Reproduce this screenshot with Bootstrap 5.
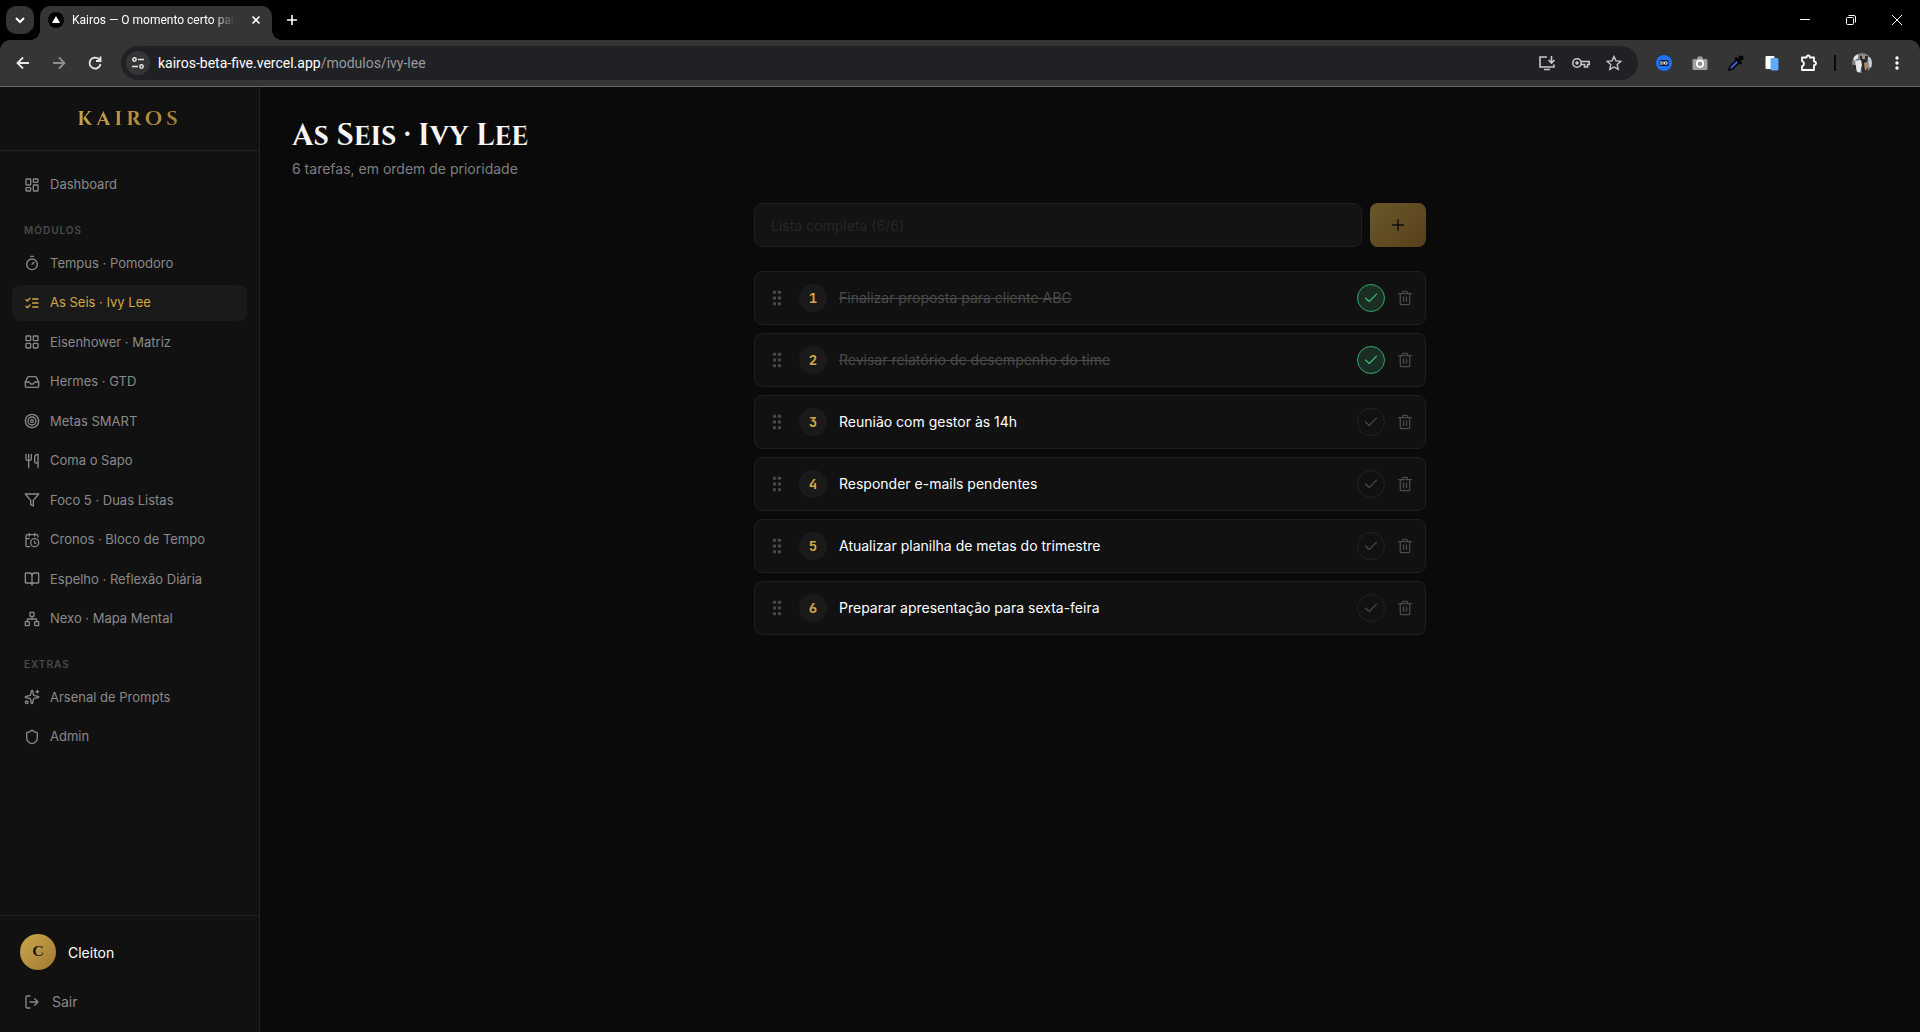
<!DOCTYPE html>
<html lang="pt-BR">
<head>
<meta charset="utf-8">
<meta name="viewport" content="width=device-width, initial-scale=1">
<title>Kairos — O momento certo</title>
<link href="https://cdn.jsdelivr.net/npm/bootstrap@5.3.0/dist/css/bootstrap.min.css" rel="stylesheet">
<style>
  body { background: #0a0a0a; color: #f5f5f5; font-family: Inter, sans-serif; font-size: 14px; }
  svg { display: block; flex: none; }
  .ico { width: 16px; height: 16px; fill: none; stroke: currentColor; stroke-width: 2; stroke-linecap: round; stroke-linejoin: round; }
  button { background: none; border: 0; padding: 0; color: inherit; }

  /* browser window */
  .tabstrip { height: 40px; background: #000; padding-left: 6px; }
  .tab-menu { width: 28px; height: 28px; border-radius: 10px; background: #353535; color: #fff; }
  .tab-open { width: 232px; height: 34px; margin: 6px 0 0 6px; padding: 0 10px 6px 8px; border-radius: 10px 10px 0 0; background: #353535; position: relative; font: 12px/16px Roboto, sans-serif; color: #fff; }
  .tab-open::before, .tab-open::after { content: ""; position: absolute; bottom: 0; width: 10px; height: 10px; }
  .tab-open::before { left: -10px; background: radial-gradient(circle at 0 0, #000 10px, #353535 10px); }
  .tab-open::after { right: -10px; background: radial-gradient(circle at 100% 0, #000 10px, #353535 10px); }
  .tab-name { margin-left: 8px; -webkit-mask-image: linear-gradient(90deg, #000 86%, transparent); mask-image: linear-gradient(90deg, #000 86%, transparent); }
  .tab-new { margin-left: 12px; }
  .winctl { gap: 34px; padding-right: 17px; color: #fff; }
  .toolbar-wrap { background: #000; }
  .urlbar { height: 47px; background: #353535; border-bottom: 1px solid #666; border-radius: 10px 10px 0 0; padding: 0 16px 0 15px; }
  .navctl { gap: 20px; margin-right: 18px; color: #e8e8e8; }
  .omnibox { height: 34px; border-radius: 17px; background: #202124; padding: 0 16px 0 5px; color: #c7c7c7; }
  .siteinfo { width: 24px; height: 24px; border-radius: 12px; background: #353535; color: #e8e8e8; }
  .address { margin-left: 8px; font: 14px/20px Roboto, sans-serif; color: #9a9a9a; }
  .address b { font-weight: 400; color: #fff; }
  .exts { gap: 20px; margin-left: 18px; color: #fff; }
  .ext-sep { width: 2px; height: 16px; background: #0a0a0a; }

  /* app */
  .side { width: 260px; background: #111; border-right: 1px solid #222; }
  .brandbox { height: 64px; border-bottom: 1px solid #222; }
  .brandname { font: 700 20px/30px Cinzel, "Liberation Serif", serif; letter-spacing: 4px; background: linear-gradient(135deg, #c9a84c, #a07830); -webkit-background-clip: text; background-clip: text; color: transparent; }
  .menu { padding: 16px 12px; }
  .menu-link { display: flex; align-items: center; gap: 10px; padding: 8px 12px; margin-bottom: 4px; border-radius: 8px; font-size: 13px; line-height: 1.5; color: #8a8a8a; text-decoration: none; }
  .menu-link.on { background: #1a1a1a; color: #d4a843; }
  .menu-head { padding: 16px 12px 8px; font-size: 10px; line-height: 15px; font-weight: 600; letter-spacing: 1px; color: #4a4a4a; margin: 0; }
  .userbox { border-top: 1px solid #222; padding: 12px; }
  .who { padding: 6px 8px; margin-bottom: 7px; gap: 12px; color: #fff; }
  .face { width: 36px; height: 36px; background: linear-gradient(135deg, #c9a84c, #a07830); color: #0a0a0a; font: 600 14px/36px Cinzel, "Liberation Serif", serif; text-align: center; }
  .leave { padding: 8px 12px; gap: 12px; line-height: 21px; color: #8a8a8a; }
  .content { padding: 32px; }
  .heading { font: 700 30px/35px Cinzel, "Liberation Serif", serif; margin: 0; color: #f5f5f5; }
  .subtitle { line-height: 21px; margin: 4px 0 24px; color: #7f7f7f; }
  .sheet { max-width: 672px; }
  .addbox { height: 44px; background: #131313; border: 1px solid #1f1f1f; border-radius: 8px; padding: 0 16px; color: #f5f5f5; min-width: 0; }
  .addbox::placeholder { color: #262626; opacity: 1; }
  .addbtn { width: 56px; height: 44px; border-radius: 8px; background: linear-gradient(135deg, #6a5829, #57401c); color: #0a0a0a; }
  .task { background: #111; border: 1px solid #1f1f1f; border-radius: 8px; padding: 12px; gap: 12px; }
  .grip, .bin { color: #4a4a4a; }
  .bin .ico { stroke-width: 1.3; }
  .rank { width: 28px; height: 28px; background: #1a1a1a; color: #d4a843; font: 700 14px/28px "JetBrains Mono", "Liberation Mono", monospace; text-align: center; }
  .done-btn { width: 28px; height: 28px; border: 1px solid #222; color: #4a4a4a; }
  .done-btn .ico { width: 14px; height: 14px; }
  .label-text { line-height: 20px; color: #fff; }
  .is-done .done-btn { background: #1a2e23; border-color: #33a86b; color: #3dbb78; }
  .is-done .label-text { color: #4a4a4a; text-decoration: line-through; }
</style>
<script src="https://cdn.jsdelivr.net/npm/bootstrap@5.3.0/dist/js/bootstrap.bundle.min.js"></script>
</head>
<body class="d-flex flex-column vh-100 overflow-hidden">

<svg class="d-none">
  <symbol id="check" viewBox="0 0 24 24"><path d="M21.500 5.500 9 18l-6.500-6"/></symbol>
  <symbol id="bin" viewBox="0 0 16 16"><path d="M1.500 3.700h13M5.500 3.500v-1.200q0-1 1-1h3q1 0 1 1v1.200M3.300 3.700v9.800q0 1.200 1 1.200h7.400q1 0 1-1.200V3.700M6.500 7v4.500M9.500 7v4.500"/></symbol>
  <symbol id="grip" viewBox="0 0 20 20"><g fill="currentColor" stroke="none"><circle cx="7.500" cy="4.200" r="1.700"/><circle cx="12.500" cy="4.200" r="1.700"/><circle cx="7.500" cy="10" r="1.700"/><circle cx="12.500" cy="10" r="1.700"/><circle cx="7.500" cy="15.800" r="1.700"/><circle cx="12.500" cy="15.800" r="1.700"/></g></symbol>
</svg>

<header>
  <div class="tabstrip d-flex align-items-center">
    <button class="tab-menu d-flex align-items-center justify-content-center" aria-label="Pesquisar guias"><svg width="12" height="12" viewBox="0 0 12 12" fill="none" stroke="currentColor" stroke-width="2"><path d="M2 4l4 4 4-4"/></svg></button>
    <div class="tab-open d-flex align-items-center">
      <svg width="16" height="16" viewBox="0 0 16 16"><circle cx="8" cy="8" r="8"/><path d="M8 4l4 7H4z" fill="#fff"/></svg>
      <span class="tab-name text-nowrap">Kairos — O momento certo par</span>
      <button class="ms-auto" aria-label="Fechar guia"><svg width="12" height="12" viewBox="0 0 12 12" fill="none" stroke="#fff" stroke-width="1.6"><path d="M2.500 2.500l7 7M9.500 2.500l-7 7"/></svg></button>
    </div>
    <button class="tab-new" aria-label="Nova guia"><svg width="16" height="16" viewBox="0 0 16 16" fill="none" stroke="#fff" stroke-width="1.6"><path d="M8 3v10M3 8h10"/></svg></button>
    <div class="winctl d-flex align-items-center ms-auto">
      <button aria-label="Minimizar"><svg width="12" height="12" viewBox="0 0 12 12" stroke="#fff"><path d="M1 5.500h10"/></svg></button>
      <button aria-label="Restaurar"><svg width="12" height="12" viewBox="0 0 12 12" fill="none" stroke="#fff"><rect x="1.500" y="3.500" width="7" height="7" rx="1"/><path d="M3.500 1.500H9q1.500 0 1.500 1.500v5.500"/></svg></button>
      <button aria-label="Fechar"><svg width="12" height="12" viewBox="0 0 12 12" fill="none" stroke="#fff"><path d="M1 1l10 10M11 1L1 11"/></svg></button>
    </div>
  </div>
  <div class="toolbar-wrap">
    <div class="urlbar d-flex align-items-center">
      <div class="navctl d-flex">
        <button aria-label="Voltar"><svg width="16" height="16" viewBox="0 0 16 16" fill="none" stroke="currentColor" stroke-width="1.8"><path d="M14 8H3M8 2.500L2.500 8 8 13.500"/></svg></button>
        <button class="opacity-50" aria-label="Avançar"><svg width="16" height="16" viewBox="0 0 16 16" fill="none" stroke="currentColor" stroke-width="1.8"><path d="M2 8h11M8 2.500L13.500 8 8 13.500"/></svg></button>
        <button aria-label="Recarregar"><svg width="16" height="16" viewBox="0 0 16 16" fill="none" stroke="currentColor" stroke-width="1.8"><path d="M13.500 9A5.500 5.500 0 1 1 12 4.200L13.500 6M13.500 1.500V6H9"/></svg></button>
      </div>
      <div class="omnibox d-flex align-items-center flex-grow-1">
        <button class="siteinfo d-flex align-items-center justify-content-center" aria-label="Informações do site"><svg width="14" height="14" viewBox="0 0 14 14" fill="none" stroke="currentColor" stroke-width="1.5"><circle cx="3.500" cy="3.500" r="1.700"/><path d="M7 3.500h6M1 10.500h6"/><circle cx="10.500" cy="10.500" r="1.700"/></svg></button>
        <span class="address"><b>kairos-beta-five.vercel.app</b>/modulos/ivy-lee</span>
        <div class="d-flex ms-auto gap-3 align-items-center">
          <svg width="18" height="16" viewBox="0 0 18 16" fill="none" stroke="currentColor" stroke-width="1.6"><path d="M9 2H2v10h14V9.500M13.500 1v7M10.500 5l3 3 3-3M6 14.500h6"/></svg>
          <svg width="18" height="16" viewBox="0 0 18 16" fill="none" stroke="currentColor" stroke-width="1.6"><circle cx="5" cy="8" r="4.200"/><circle cx="5" cy="8" r="1" fill="currentColor"/><path d="M9 6.500h8.200v3h-1.700v2.500h-3V9.500H9"/></svg>
          <svg width="16" height="16" viewBox="0 0 16 16" fill="none" stroke="currentColor" stroke-width="1.4"><path d="M8 1.500l2 4.400 4.800.5-3.600 3.200 1 4.800L8 12l-4.200 2.400 1-4.800L1.200 6.400 6 5.900z"/></svg>
        </div>
      </div>
      <div class="exts d-flex align-items-center">
        <svg width="16" height="16" viewBox="0 0 16 16"><circle cx="8" cy="8" r="8" fill="#2071f3"/><rect x="3.500" y="5" width="9" height="6" rx="1" fill="#0a1a3a"/><path d="M5 6v4M7 6.500v3" stroke="#fff"/><circle cx="9.700" cy="8" r="1.400" fill="none" stroke="#fff"/></svg>
        <svg width="16" height="16" viewBox="0 0 16 16"><path d="M2 4h3l1-2.500h4L11 4h3q1.500 0 1.500 1.500v8Q15.500 15 14 15H2Q.5 15 .5 13.500v-8Q.5 4 2 4z" fill="#a0a0a0"/><circle cx="8" cy="8.700" r="3.200" fill="#8c8c8c" stroke="#fff" stroke-width="1.8"/></svg>
        <svg width="16" height="16" viewBox="0 0 16 16"><path d="M1 15l1-3.500L9 4.500 11.500 7l-7 7z" fill="#3f5bd8" stroke="#000" stroke-width="1.5"/><path d="M8 3.500l4.500 4.500M10 6l3-3" stroke="#000" stroke-width="2.5" stroke-linecap="round"/><circle cx="13" cy="3" r="2.500"/></svg>
        <svg width="16" height="16" viewBox="0 0 16 16"><rect x="1.500" y="1" width="9" height="13" rx="1" fill="#fff"/><rect x="6.500" y="3" width="8" height="12.500" rx="1.500" fill="#62a8fb"/></svg>
        <div class="d-flex align-items-center gap-3">
          <svg width="18" height="18" viewBox="0 0 18 18" fill="none" stroke="#fff" stroke-width="1.8" stroke-linejoin="round"><path d="M2 3.500h4.500q0-2 1.700-2t1.700 2H14v4q2 .2 2 1.800t-2 1.800V16H2v-3.600q2-.6 2-2.600T2 7.100z"/></svg>
          <span class="ext-sep"></span>
          <svg width="20" height="20" viewBox="0 0 20 20"><defs><clipPath id="pic"><circle cx="10" cy="10" r="10"/></clipPath></defs><g clip-path="url(#pic)"><path fill="#7b8387" d="M0 0h20v20H0z"/><path fill="#2b2a2b" d="M8 3h8l-1 6 1 11h-6L8 10zM0 12h4l1 8H0z"/><path fill="#e4e7e8" d="M3 8l6-1 1 5-2 8H5zM1 3l5-2v4L2 8z"/><path fill="#b08a70" d="M12 10l3-1 1 5-3 4zM10 2h3v4h-3z"/><path fill="#c3ced3" d="M16 4l4 1v10l-3-1z"/></g></svg>
          <svg width="16" height="16" viewBox="0 0 16 16" fill="#fff"><circle cx="9" cy="3" r="1.700"/><circle cx="9" cy="8" r="1.700"/><circle cx="9" cy="13" r="1.700"/></svg>
        </div>
      </div>
    </div>
  </div>
</header>

<div class="d-flex flex-grow-1">
  <aside class="side d-flex flex-column flex-shrink-0">
    <div class="brandbox d-flex align-items-center justify-content-center"><span class="brandname">KAIROS</span></div>
    <nav class="menu flex-grow-1">
      <a class="menu-link" href="#"><svg class="ico" viewBox="0 0 24 24"><rect x="3" y="3" width="7" height="9" rx="1"/><rect x="14" y="3" width="7" height="5" rx="1"/><rect x="14" y="12" width="7" height="9" rx="1"/><rect x="3" y="16" width="7" height="5" rx="1"/></svg>Dashboard</a>
      <h2 class="menu-head">MÓDULOS</h2>
      <a class="menu-link" href="#"><svg class="ico" viewBox="0 0 24 24"><path d="M10 2h4M12 14l3-3"/><circle cx="12" cy="14" r="8"/></svg>Tempus · Pomodoro</a>
      <a class="menu-link on" href="#" aria-current="page"><svg class="ico" viewBox="0 0 24 24"><path d="m3 17 2 2 4-4M3 7l2 2 4-4M13 6h8M13 12h8M13 18h8"/></svg>As Seis · Ivy Lee</a>
      <a class="menu-link" href="#"><svg class="ico" viewBox="0 0 24 24"><rect x="3" y="3" width="7" height="7" rx="1"/><rect x="14" y="3" width="7" height="7" rx="1"/><rect x="14" y="14" width="7" height="7" rx="1"/><rect x="3" y="14" width="7" height="7" rx="1"/></svg>Eisenhower · Matriz</a>
      <a class="menu-link" href="#"><svg class="ico" viewBox="0 0 24 24"><path d="M22 12h-6l-2 3h-4l-2-3H2"/><path d="M5.450 5.110 2 12v6a2 2 0 0 0 2 2h16a2 2 0 0 0 2-2v-6l-3.450-6.890A2 2 0 0 0 16.760 4H7.240a2 2 0 0 0-1.790 1.110z"/></svg>Hermes · GTD</a>
      <a class="menu-link" href="#"><svg class="ico" viewBox="0 0 24 24"><circle cx="12" cy="12" r="10"/><circle cx="12" cy="12" r="6"/><circle cx="12" cy="12" r="2"/></svg>Metas SMART</a>
      <a class="menu-link" href="#"><svg class="ico" viewBox="0 0 24 24"><path d="M3 2v7c0 1.100.9 2 2 2h4a2 2 0 0 0 2-2V2M7 2v20M21 15V2a5 5 0 0 0-5 5v6c0 1.100.9 2 2 2h3Zm0 0v7"/></svg>Coma o Sapo</a>
      <a class="menu-link" href="#"><svg class="ico" viewBox="0 0 24 24"><path d="M22 3H2l8 9.460V19l4 2v-8.540z"/></svg>Foco 5 · Duas Listas</a>
      <a class="menu-link" href="#"><svg class="ico" viewBox="0 0 24 24"><path d="M21 7.500V6a2 2 0 0 0-2-2H5a2 2 0 0 0-2 2v14a2 2 0 0 0 2 2h3.500M16 2v4M8 2v4M3 10h5M17.500 17.500 16 16.300V14"/><circle cx="16" cy="16" r="6"/></svg>Cronos · Bloco de Tempo</a>
      <a class="menu-link" href="#"><svg class="ico" viewBox="0 0 24 24"><path d="M12 7v14M3 18a1 1 0 0 1-1-1V4a1 1 0 0 1 1-1h5a4 4 0 0 1 4 4 4 4 0 0 1 4-4h5a1 1 0 0 1 1 1v13a1 1 0 0 1-1 1h-6a3 3 0 0 0-3 3 3 3 0 0 0-3-3z"/></svg>Espelho · Reflexão Diária</a>
      <a class="menu-link" href="#"><svg class="ico" viewBox="0 0 24 24"><rect x="16" y="16" width="6" height="6" rx="1"/><rect x="2" y="16" width="6" height="6" rx="1"/><rect x="9" y="2" width="6" height="6" rx="1"/><path d="M5 16v-3a1 1 0 0 1 1-1h12a1 1 0 0 1 1 1v3M12 12V8"/></svg>Nexo · Mapa Mental</a>
      <h2 class="menu-head">EXTRAS</h2>
      <a class="menu-link" href="#"><svg class="ico" viewBox="0 0 24 24"><path d="M11.017 2.814a1 1 0 0 1 1.966 0l1.051 5.558a2 2 0 0 0 1.594 1.594l5.558 1.051a1 1 0 0 1 0 1.966l-5.558 1.051a2 2 0 0 0-1.594 1.594l-1.051 5.558a1 1 0 0 1-1.966 0l-1.051-5.558a2 2 0 0 0-1.594-1.594l-5.558-1.051a1 1 0 0 1 0-1.966l5.558-1.051a2 2 0 0 0 1.594-1.594zM20 2v4M22 4h-4"/><circle cx="4" cy="20" r="2"/></svg>Arsenal de Prompts</a>
      <a class="menu-link" href="#"><svg class="ico" viewBox="0 0 24 24"><path d="M20 13c0 5-3.500 7.500-7.660 8.950a1 1 0 0 1-.67-.01C7.500 20.500 4 18 4 13V6a1 1 0 0 1 1-1c2 0 4.500-1.200 6.240-2.720a1.170 1.170 0 0 1 1.520 0C14.510 3.810 17 5 19 5a1 1 0 0 1 1 1z"/></svg>Admin</a>
    </nav>
    <div class="userbox">
      <div class="who d-flex align-items-center"><span class="face rounded-circle">C</span>Cleiton</div>
      <button class="leave d-flex align-items-center w-100"><svg class="ico" viewBox="0 0 24 24"><path d="M9 21H5a2 2 0 0 1-2-2V5a2 2 0 0 1 2-2h4M16 17l5-5-5-5M21 12H9"/></svg>Sair</button>
    </div>
  </aside>

  <main class="content flex-grow-1">
    <h1 class="heading">As Seis · Ivy Lee</h1>
    <p class="subtitle">6 tarefas, em ordem de prioridade</p>
    <div class="sheet mx-auto">
      <form class="d-flex gap-2 mb-4">
        <input class="addbox flex-grow-1" type="text" placeholder="Lista completa (6/6)" aria-label="Nova tarefa" disabled>
        <button class="addbtn d-flex align-items-center justify-content-center" type="button" aria-label="Adicionar" disabled><svg class="ico" viewBox="0 0 24 24"><path d="M4 12h16M12 4v16"/></svg></button>
      </form>
      <ol class="list-unstyled d-flex flex-column gap-2 mb-0">
        <li class="task is-done d-flex align-items-center"><button class="grip" aria-label="Mover"><svg width="20" height="20"><use href="#grip"/></svg></button><span class="rank rounded-circle">1</span><span class="label-text flex-grow-1">Finalizar proposta para cliente ABC</span><button class="done-btn rounded-circle d-flex align-items-center justify-content-center" aria-label="Concluir"><svg class="ico"><use href="#check"/></svg></button><button class="bin" aria-label="Excluir"><svg class="ico"><use href="#bin"/></svg></button></li>
        <li class="task is-done d-flex align-items-center"><button class="grip" aria-label="Mover"><svg width="20" height="20"><use href="#grip"/></svg></button><span class="rank rounded-circle">2</span><span class="label-text flex-grow-1">Revisar relatório de desempenho do time</span><button class="done-btn rounded-circle d-flex align-items-center justify-content-center" aria-label="Concluir"><svg class="ico"><use href="#check"/></svg></button><button class="bin" aria-label="Excluir"><svg class="ico"><use href="#bin"/></svg></button></li>
        <li class="task d-flex align-items-center"><button class="grip" aria-label="Mover"><svg width="20" height="20"><use href="#grip"/></svg></button><span class="rank rounded-circle">3</span><span class="label-text flex-grow-1">Reunião com gestor às 14h</span><button class="done-btn rounded-circle d-flex align-items-center justify-content-center" aria-label="Concluir"><svg class="ico"><use href="#check"/></svg></button><button class="bin" aria-label="Excluir"><svg class="ico"><use href="#bin"/></svg></button></li>
        <li class="task d-flex align-items-center"><button class="grip" aria-label="Mover"><svg width="20" height="20"><use href="#grip"/></svg></button><span class="rank rounded-circle">4</span><span class="label-text flex-grow-1">Responder e-mails pendentes</span><button class="done-btn rounded-circle d-flex align-items-center justify-content-center" aria-label="Concluir"><svg class="ico"><use href="#check"/></svg></button><button class="bin" aria-label="Excluir"><svg class="ico"><use href="#bin"/></svg></button></li>
        <li class="task d-flex align-items-center"><button class="grip" aria-label="Mover"><svg width="20" height="20"><use href="#grip"/></svg></button><span class="rank rounded-circle">5</span><span class="label-text flex-grow-1">Atualizar planilha de metas do trimestre</span><button class="done-btn rounded-circle d-flex align-items-center justify-content-center" aria-label="Concluir"><svg class="ico"><use href="#check"/></svg></button><button class="bin" aria-label="Excluir"><svg class="ico"><use href="#bin"/></svg></button></li>
        <li class="task d-flex align-items-center"><button class="grip" aria-label="Mover"><svg width="20" height="20"><use href="#grip"/></svg></button><span class="rank rounded-circle">6</span><span class="label-text flex-grow-1">Preparar apresentação para sexta-feira</span><button class="done-btn rounded-circle d-flex align-items-center justify-content-center" aria-label="Concluir"><svg class="ico"><use href="#check"/></svg></button><button class="bin" aria-label="Excluir"><svg class="ico"><use href="#bin"/></svg></button></li>
      </ol>
    </div>
  </main>
</div>
</body>
</html>
